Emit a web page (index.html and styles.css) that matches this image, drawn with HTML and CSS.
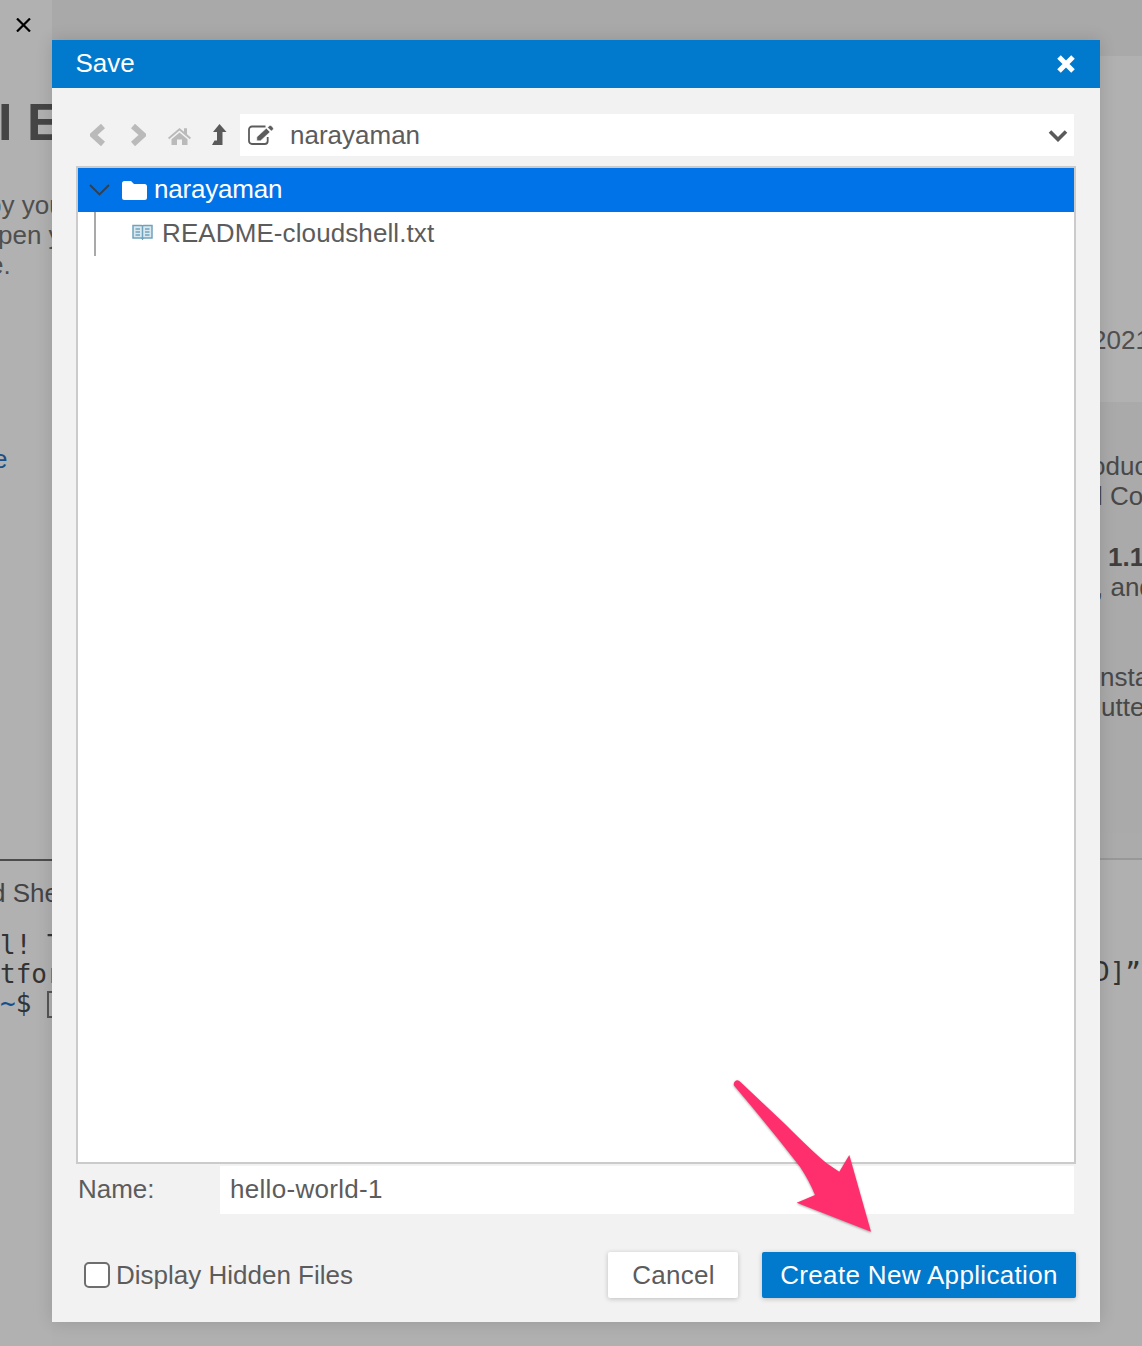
FILE: index.html
```html
<!DOCTYPE html>
<html lang="en">
<head>
<meta charset="utf-8">
<title>Save</title>
<link rel="stylesheet" href="styles.css">
</head>
<body>
<div class="page">
  <aside class="strip-left">
    <svg class="page-close" viewBox="0 0 15 14"><path d="M1 .5 14 13.5M14 .5 1 13.5"/></svg>
    <div class="heading">I E</div>
    <div class="para">
      <div class="ln off-y">by you</div>
      <div class="ln off-p">pen y</div>
      <div class="ln off-e">e.</div>
    </div>
    <div class="ln link off-link">e</div>
    <div class="rule-dark"></div>
    <div class="ln shell-title off-d">d She</div>
    <div class="mono">
      <div>l! T</div>
      <div>tfor</div>
      <div><span class="tilde">~</span>$ <span class="cursor"></span></div>
    </div>
  </aside>

  <main class="center">
    <section class="dialog">
      <header class="dialog-head">
        <span class="dialog-title">Save</span>
        <svg class="dialog-x" viewBox="0 0 20 20"><path d="M3 3 17 17M17 3 3 17"/></svg>
      </header>
      <div class="dialog-body">
        <div class="toolbar">
          <svg class="ic ic-prev" viewBox="0 0 15 22"><path d="M13 2 3 11l10 9"/></svg>
          <svg class="ic ic-next" viewBox="0 0 15 22"><path d="M2 2l10 9-10 9"/></svg>
          <svg class="ic-home" viewBox="0 0 23 19"><path d="M11.500 2 0 11.700l1.200 1.500L11.500 4.600l10.300 8.600 1.200-1.500-4-3.400V2.200h-3v3.600zM3.500 13.200V19h5.500v-5.500h5V19h5.500v-5.800L11.500 6.500z"/></svg>
          <svg class="ic-up" viewBox="0 0 15 21"><path d="M7.500 0 14.500 8H10.500V21H0l2.500-4.500H5V8H1z"/></svg>
          <div class="path-box">
            <svg class="ic-edit" viewBox="0 0 26 20"><path class="box" d="M19.700 12v4a3 3 0 0 1-3 3H4a3 3 0 0 1-3-3V4.500a3 3 0 0 1 3-3h13.500"/><path class="pen" d="M8.800 12 18.300 3.300l3.700 3.700-9.400 8.700H8.800z"/><path class="pen" d="M19.600 2.400 21.400.8q.9-.6 1.800 0l1.900 1.900q.7.900 0 1.800L23.300 6z"/></svg>
            <span class="path-text">narayaman</span>
            <svg class="path-caret" viewBox="0 0 20 13"><path d="M2 2.500l8 8 8-8"/></svg>
          </div>
        </div>

        <div class="tree">
          <div class="row row-root">
            <svg class="twisty" viewBox="0 0 21 12"><path d="M1 1l9.500 9.500L20 1"/></svg>
            <svg class="folder" viewBox="0 0 25 19"><path d="M2.500 0h6.500l3 3h10.500A2.500 2.500 0 0 1 25 5.500v11a2.500 2.500 0 0 1-2.500 2.500h-20A2.500 2.500 0 0 1 0 16.500v-14A2.500 2.500 0 0 1 2.500 0z"/></svg>
            <span class="root-name">narayaman</span>
          </div>
          <div class="row row-file">
            <span class="guide"></span>
            <svg class="book" viewBox="0 0 21 16"><path class="fill" d="M1 1.500h8.500q1 0 1 1 0-1 1-1H20V14h-8q-1 0-1.500 1-.5-1-1.500-1H1z"/><path class="lines" d="M1 1.500h8.500q1 0 1 1 0-1 1-1H20V14h-8q-1 0-1.500 1-.5-1-1.500-1H1zM10.500 2.500V15M3.500 5H8M3.500 8H8M3.500 11H8M13 5h4.500M13 8h4.500M13 11h4.500"/></svg>
            <span class="file-name">README-cloudshell.txt</span>
          </div>
        </div>

        <div class="name-row">
          <label class="name-label" for="name">Name:</label>
          <input class="name-input" id="name" value="hello-world-1">
        </div>

        <div class="actions">
          <label class="hidden-toggle"><span class="check"></span>Display Hidden Files</label>
          <button class="btn btn-cancel">Cancel</button>
          <button class="btn btn-create">Create New Application</button>
        </div>
      </div>
    </section>
  </main>

  <aside class="strip-right">
    <div class="band band-top"></div>
    <div class="band band-date">
      <div class="ln off-date">2021</div>
    </div>
    <div class="band band-card">
      <div class="ln off-o">oduc</div>
      <div class="ln off-l">l Co</div>
      <div class="ln bold off-11">1.1</div>
      <div class="ln off-and">, and</div>
      <div class="ln off-nsta gap-nsta">nsta</div>
      <div class="ln off-utte">utte</div>
    </div>
    <div class="band band-tabs"></div>
    <div class="band band-term">
      <div class="mono mono-right">D]”</div>
    </div>
  </aside>
</div>

<svg class="arrow" viewBox="0 0 150 165">
  <path d="M4 10.500Q3 7 6 5.500 8.500 4.500 10.500 7L55 49Q84 78 96.700 88.300L109.300 96.700 119.300 80 141 156.700 66.700 127.700 85 120Q80 107 70 91.700 40 53 4 10.500z"/>
</svg>
</body>
</html>
```

FILE: styles.css
```css
* { box-sizing: border-box; }
html, body { margin: 0; height: 1346px; overflow: hidden; }
body {
  font-family: "Liberation Sans", Arial, sans-serif;
  font-size: 26px;
  color: #5c5c5c;
  background: #b0b0b0;
  position: relative;
}
.page { display: flex; height: 1346px; }

/* Dimmed page behind the dialog */
.strip-left, .strip-right { overflow: hidden; flex: none; color: #4f4f4f; }
.strip-left { width: 52px; background: #b1b1b1; }
.strip-right { width: 42px; background: #b0b0b0; }
.ln { height: 30px; line-height: 30px; white-space: nowrap; }
.page-close {
  display: block; width: 15px; height: 14px; margin: 18px 0 0 16px;
  fill: none; stroke: #000; stroke-width: 2.2;
}
.heading {
  height: 50px; margin: 65px 0 0 -2px; line-height: 50px;
  font-size: 52px; font-weight: 700; color: #454545; white-space: nowrap; letter-spacing: 0;
}
.para { margin-top: 43px; }
.off-y { margin-left: -13px; }
.off-p { margin-left: -2px; }
.off-e { margin-left: -11px; }
.link { margin-top: 164px; color: #1c4f85; }
.off-link { margin-left: -7px; }
.rule-dark { height: 2px; margin-top: 385px; background: #4c4c4c; }
.shell-title { margin-top: 17px; color: #444; }
.off-d { margin-left: -9px; }
.mono {
  margin-top: 23px;
  font-family: "DejaVu Sans Mono", "Liberation Mono", monospace;
  line-height: 29px; color: #333; white-space: nowrap;
}
.tilde { color: #134f8f; }
.cursor {
  display: inline-block; width: 16px; height: 27px;
  border: 2px solid #555; vertical-align: -6px;
}

.band-top { height: 56px; background: #a9a9a9; }
.band-date { height: 346px; padding-top: 269px; background: #b1b1b1; }
.off-date { margin-left: -8px; }
.band-card { height: 431px; padding-top: 49px; background: #aaaaaa; color: #484848; }
.off-o { margin-left: -9px; }
.off-l { margin-left: -3px; }
.bold { margin-top: 31px; font-weight: 700; color: #3f3f3f; }
.off-11 { margin-left: 8px; }
.off-and { margin-left: -4px; }
.gap-nsta { margin-top: 60px; }
.off-nsta { margin-left: 0; }
.off-utte { margin-left: 1px; }
.band-tabs { height: 27px; background: #ababab; border-bottom: 2px solid #989898; }
.mono-right { margin: 98px 0 0 -6px; }

/* Dialog */
.center {
  flex: none; width: 1048px; padding-top: 40px;
  background: linear-gradient(#a9a9a9 0 56px, #b0b0b0 56px);
  position: relative; z-index: 1;
}
.dialog { display: flex; flex-direction: column; height: 1282px; background: #f2f2f2; box-shadow: 0 0 16px rgba(0, 0, 0, .14); }
.dialog-head {
  display: flex; align-items: center; justify-content: space-between;
  height: 48px; padding: 0 24px 0 24px;
  background: #0179cd; color: #fff;
}
.dialog-title { margin: -2px 0 0 -.5px; }
.dialog-x { width: 20px; height: 20px; fill: none; stroke: #fff; stroke-width: 5; }
.dialog-body { display: flex; flex-direction: column; padding: 26px 24px 24px; flex: 1; }

.toolbar { display: flex; align-items: center; height: 42px; margin-right: 2px; }
.ic { width: 15px; height: 22px; fill: none; stroke: #bababa; stroke-width: 6; margin-top: -1px; }
.ic-prev { margin-left: 14px; }
.ic-next { margin-left: 26px; }
.ic-home { width: 23px; height: 19px; margin-left: 22px; fill: #bababa; }
.ic-up { width: 15px; height: 21px; margin-left: 21px; margin-top: -2px; fill: #5a5a5a; }
.path-box {
  display: flex; align-items: center; flex: 1; height: 42px;
  margin-left: 13px; padding: 0 6px 0 8px; background: #fff;
}
.ic-edit { width: 26px; height: 20px; overflow: visible; fill: none; flex: none; }
.ic-edit .box { stroke: #5c5c5c; stroke-width: 1.800; }
.ic-edit .pen { fill: #5c5c5c; stroke: #fff; stroke-width: .5; }
.path-text { margin-left: 16px; flex: 1; }
.path-caret { width: 20px; height: 13px; fill: none; stroke: #5a5a5a; stroke-width: 3.600; }

.tree { height: 998px; margin-top: 10px; border: 2px solid #cbcbcb; background: #fff; }
.row { display: flex; align-items: center; height: 44px; }
.row-root { padding-left: 11px; background: #0073e8; color: #fff; }
.twisty { width: 21px; height: 12px; fill: none; stroke: #333f4d; stroke-width: 1.800; }
.folder { width: 25px; height: 19px; margin-left: 12px; fill: #fff; }
.root-name { margin: -2px 0 0 7px; letter-spacing: -.2px; }
.row-file { padding-left: 16px; align-items: stretch; line-height: 42px; }
.guide { width: 2px; background: #a9a9a9; }
.book { width: 21px; height: 16px; margin: 12px 0 0 36px; fill: none; }
.book .fill { fill: #d9e8ef; }
.book .lines { stroke: #6fa3bd; stroke-width: 1.500; }
.file-name { margin-left: 9px; letter-spacing: .1px; }

.name-row { display: flex; align-items: center; height: 48px; margin: 2px 2px 0 0; }
.name-label { width: 144px; padding: 0 0 2px 2px; letter-spacing: -.05px; }
.name-input {
  flex: 1; height: 48px; padding: 0 10px 2px; border: 0; outline: 0;
  background: #fff; color: #5c5c5c; letter-spacing: .3px;
  font: 26px "Liberation Sans", Arial, sans-serif;
}

.actions { display: flex; align-items: center; height: 46px; margin-top: 38px; }
.hidden-toggle { display: flex; align-items: center; margin-right: auto; padding-left: 8px; }
.check {
  width: 26px; height: 26px; margin-right: 6px;
  border: 2px solid #6e6e6e; border-radius: 5px; background: #fff;
}
.btn {
  height: 46px; padding: 0; border: 0; border-radius: 2px;
  font: 26px "Liberation Sans", Arial, sans-serif;
  box-shadow: 0 1px 5px rgba(0, 0, 0, .22);
}
.btn-cancel { width: 130px; padding-left: 1px; background: #fff; color: #5c5c5c; letter-spacing: .3px; }
.btn-create { width: 314px; margin-left: 24px; background: #0179cd; color: #fff; letter-spacing: .33px; }

.arrow {
  position: absolute; left: 730px; top: 1075px; z-index: 2;
  width: 150px; height: 165px; fill: #ff2f6d;
  filter: drop-shadow(0 1px 1px rgba(0, 0, 0, .35));
}
```
